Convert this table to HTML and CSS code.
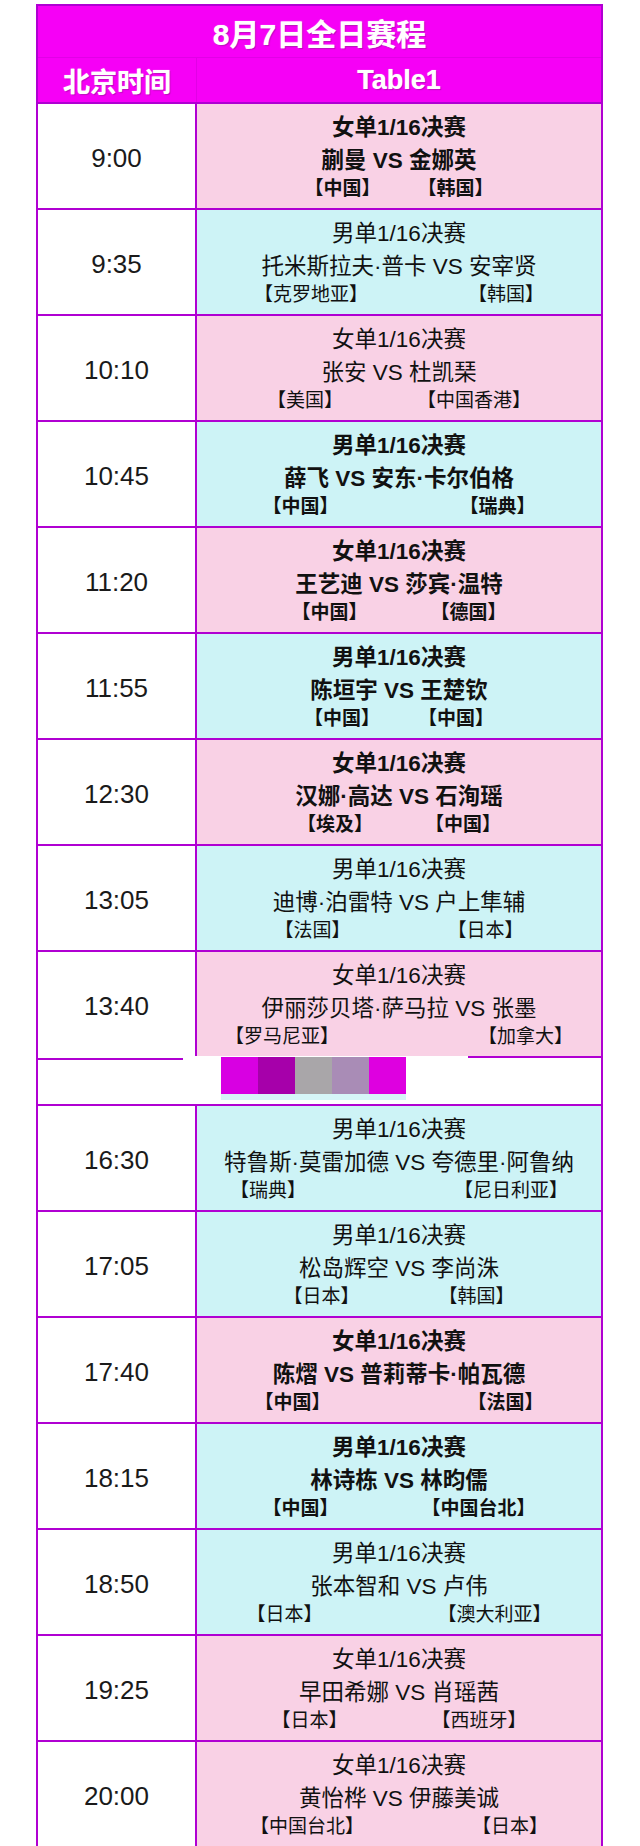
FILE: index.html
```html
<!DOCTYPE html>
<html lang="zh-CN">
<head>
<meta charset="utf-8">
<title>8月7日全日赛程</title>
<link rel="stylesheet" href="styles.css">
</head>
<body>
<div class="sheet">
  <div class="title">8月7日全日赛程</div>
  <div class="head">
    <div class="hc hc-time">北京时间</div>
    <div class="hc">Table1</div>
  </div>

  <div class="row pink b">
    <div class="time">9:00</div>
    <div class="match"><div class="ev">女单1/16决赛</div><div class="vs">蒯曼 VS 金娜英</div><div class="ct" style="--g:37px"><span>【中国】</span><span>【韩国】</span></div></div>
  </div>
  <div class="row cyan">
    <div class="time">9:35</div>
    <div class="match"><div class="ev">男单1/16决赛</div><div class="vs">托米斯拉夫·普卡 VS 安宰贤</div><div class="ct" style="--g:100px"><span>【克罗地亚】</span><span>【韩国】</span></div></div>
  </div>
  <div class="row pink">
    <div class="time">10:10</div>
    <div class="match"><div class="ev">女单1/16决赛</div><div class="vs">张安 VS 杜凯琹</div><div class="ct" style="--g:74px"><span>【美国】</span><span>【中国香港】</span></div></div>
  </div>
  <div class="row cyan b">
    <div class="time">10:45</div>
    <div class="match"><div class="ev">男单1/16决赛</div><div class="vs">薛飞 VS 安东·卡尔伯格</div><div class="ct" style="--g:121px"><span>【中国】</span><span>【瑞典】</span></div></div>
  </div>
  <div class="row pink b">
    <div class="time">11:20</div>
    <div class="match"><div class="ev">女单1/16决赛</div><div class="vs">王艺迪 VS 莎宾·温特</div><div class="ct" style="--g:63px"><span>【中国】</span><span>【德国】</span></div></div>
  </div>
  <div class="row cyan b">
    <div class="time">11:55</div>
    <div class="match"><div class="ev">男单1/16决赛</div><div class="vs">陈垣宇 VS 王楚钦</div><div class="ct" style="--g:38px"><span>【中国】</span><span>【中国】</span></div></div>
  </div>
  <div class="row pink b">
    <div class="time">12:30</div>
    <div class="match"><div class="ev">女单1/16决赛</div><div class="vs">汉娜·高达 VS 石洵瑶</div><div class="ct" style="--g:52px"><span>【埃及】</span><span>【中国】</span></div></div>
  </div>
  <div class="row cyan">
    <div class="time">13:05</div>
    <div class="match"><div class="ev">男单1/16决赛</div><div class="vs">迪博·泊雷特 VS 户上隼辅</div><div class="ct" style="--g:97px"><span>【法国】</span><span>【日本】</span></div></div>
  </div>
  <div class="row pink">
    <div class="time">13:40</div>
    <div class="match"><div class="ev">女单1/16决赛</div><div class="vs">伊丽莎贝塔·萨马拉 VS 张墨</div><div class="ct" style="--g:139px"><span>【罗马尼亚】</span><span>【加拿大】</span></div></div>
  </div>

  <div class="break">
    <div class="swatches"><i class="sw sw1"></i><i class="sw sw2"></i><i class="sw sw3"></i><i class="sw sw4"></i><i class="sw sw5"></i></div>
  </div>

  <div class="row cyan">
    <div class="time">16:30</div>
    <div class="match"><div class="ev">男单1/16决赛</div><div class="vs">特鲁斯·莫雷加德 VS 夸德里·阿鲁纳</div><div class="ct" style="--g:148px"><span>【瑞典】</span><span>【尼日利亚】</span></div></div>
  </div>
  <div class="row cyan">
    <div class="time">17:05</div>
    <div class="match"><div class="ev">男单1/16决赛</div><div class="vs">松岛辉空 VS 李尚洙</div><div class="ct" style="--g:79px"><span>【日本】</span><span>【韩国】</span></div></div>
  </div>
  <div class="row pink b">
    <div class="time">17:40</div>
    <div class="match"><div class="ev">女单1/16决赛</div><div class="vs">陈熠 VS 普莉蒂卡·帕瓦德</div><div class="ct" style="--g:137px"><span>【中国】</span><span>【法国】</span></div></div>
  </div>
  <div class="row cyan b">
    <div class="time">18:15</div>
    <div class="match"><div class="ev">男单1/16决赛</div><div class="vs">林诗栋 VS 林昀儒</div><div class="ct" style="--g:83px"><span>【中国】</span><span>【中国台北】</span></div></div>
  </div>
  <div class="row cyan">
    <div class="time">18:50</div>
    <div class="match"><div class="ev">男单1/16决赛</div><div class="vs">张本智和 VS 卢伟</div><div class="ct" style="--g:115px"><span>【日本】</span><span>【澳大利亚】</span></div></div>
  </div>
  <div class="row pink">
    <div class="time">19:25</div>
    <div class="match"><div class="ev">女单1/16决赛</div><div class="vs">早田希娜 VS 肖瑶茜</div><div class="ct" style="--g:84px"><span>【日本】</span><span>【西班牙】</span></div></div>
  </div>
  <div class="row pink last">
    <div class="time">20:00</div>
    <div class="match"><div class="ev">女单1/16决赛</div><div class="vs">黄怡桦 VS 伊藤美诚</div><div class="ct" style="--g:108px"><span>【中国台北】</span><span>【日本】</span></div></div>
  </div>
</div>
</body>
</html>
```

FILE: styles.css
```css
html, body {
  margin: 0;
  padding: 0;
  background: #ffffff;
}

body {
  font-family: "Liberation Sans", "Noto Sans CJK SC", sans-serif;
  color: #111111;
}

.sheet {
  width: 567px;
  margin: 4px 0 0 36px;
  box-sizing: border-box;
  border-top: 2px solid #b000d2;
  border-left: 2px solid #b000d2;
  border-right: 2px solid #b000d2;
}

.title {
  height: 52px;
  background: #f600f6;
  display: flex;
  align-items: center;
  justify-content: center;
  font-size: 30px;
  font-weight: 700;
  color: #ffffff;
  text-shadow: 0 0 1px #ffb8ff, 1px 1px 1px rgba(130, 0, 130, 0.55);
  border-bottom: 1px solid #e200e6;
  box-sizing: border-box;
}

.head {
  display: grid;
  grid-template-columns: 159px 1fr;
  height: 44px;
  background: #f600f6;
}

.hc {
  display: flex;
  align-items: center;
  justify-content: center;
  font-weight: 700;
  font-size: 27px;
  color: #ffffff;
  text-shadow: 0 0 1px #ffb8ff, 1px 1px 1px rgba(130, 0, 130, 0.55);
}

.hc-time {
  font-size: 27px;
  border-right: 1px solid #e200e6;
}

.row {
  display: grid;
  grid-template-columns: 159px 1fr;
  height: 106px;
  box-sizing: border-box;
  border-top: 2px solid #b000d2;
}

.row.last {
  border-bottom: 2px solid #b000d2;
  height: 108px;
}

.time {
  background: #ffffff;
  border-right: 2px solid #b000d2;
  display: flex;
  align-items: center;
  justify-content: center;
  font-size: 26px;
  color: #1a1a1a;
  padding-top: 4px;
  box-sizing: border-box;
}

.match {
  display: flex;
  flex-direction: column;
  align-items: center;
  justify-content: center;
  color: #111111;
}

.pink .match {
  background: #f9d1e5;
}

.cyan .match {
  background: #cdf3f6;
}

.b .match {
  font-weight: 700;
}

.ev,
.vs {
  font-size: 22.5px;
  line-height: 32px;
  white-space: nowrap;
}

.vs {
  line-height: 33px;
}

.ct {
  display: flex;
  gap: var(--g);
  font-size: 19px;
  line-height: 24px;
  white-space: nowrap;
}

.break {
  position: relative;
  height: 48px;
  background: #ffffff;
  box-sizing: border-box;
  padding: 1px 0 0 183px;
}

.break::before {
  content: "";
  position: absolute;
  left: 0;
  top: 2px;
  width: 145px;
  height: 2px;
  background: #b000d2;
}

.break::after {
  content: "";
  position: absolute;
  left: 430px;
  right: 0;
  top: 0;
  height: 2px;
  background: #b000d2;
}

.swatches {
  display: flex;
  height: 37px;
  border-bottom: 6px solid #d6f6f8;
  width: 185px;
}

.sw {
  display: block;
  width: 37px;
  height: 37px;
}

.sw1 { background: #d800e2; }
.sw2 { background: #a600aa; }
.sw3 { background: #a9a6a9; }
.sw4 { background: #a98cb6; }
.sw5 { background: #de00e0; }
```
